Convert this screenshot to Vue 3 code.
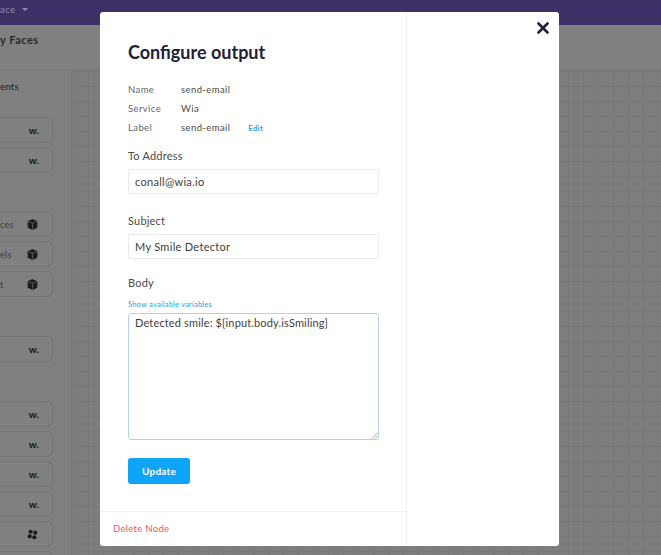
<script setup>
const groups = [
  { top: 25, items: [{ t: '', i: 'w' }, { t: '', i: 'w' }] },
  { top: 38, items: [{ t: 'ces', i: 'box' }, { t: 'els', i: 'box' }, { t: 't', i: 'box' }] },
  { top: 39, items: [{ t: '', i: 'w' }] },
  { top: 39, items: [{ t: '', i: 'w' }, { t: '', i: 'w' }, { t: '', i: 'w' }, { t: '', i: 'w' }, { t: '', i: 'fan' }, { t: '', i: 'none' }] }
]
</script>

<template>
  <div class="page">
    <header class="topbar"><span class="space">ace</span><span class="caret"></span></header>
    <div class="subbar"><span>y Faces</span></div>
    <div class="main">
      <aside class="side">
        <div class="side-title">ents</div>
        <div v-for="(g, gi) in groups" :key="gi" class="group" :style="{ marginTop: g.top + 'px' }">
          <div v-for="(it, ii) in g.items" :key="ii" class="item">
            <span class="item-text">{{ it.t }}</span>
            <span v-if="it.i === 'w'" class="w">w.</span>
            <svg v-else-if="it.i === 'box'" class="ico" viewBox="0 0 12 12"><path d="M6 .6 10.800 2.700V9.300L6 11.400 1.200 9.300V2.700z" fill="#1c1c1c" stroke="#1c1c1c" stroke-linejoin="round"/><path d="M6 4.600v6.400M1.800 3 6 4.600 10.200 3" stroke="#6a6a6a" stroke-width=".8" fill="none"/></svg>
            <svg v-else-if="it.i === 'fan'" class="ico" viewBox="0 0 12 12"><g fill="#1c1c1c"><circle cx="4" cy="3" r="2.300"/><circle cx="9" cy="4" r="2.300"/><circle cx="8" cy="9" r="2.300"/><circle cx="3" cy="8" r="2.300"/></g><circle cx="6" cy="6" r=".8" fill="#808080"/></svg>
          </div>
        </div>
      </aside>
      <div class="canvas"></div>
    </div>

    <section class="modal">
      <div class="col">
        <div class="col-body">
          <h1>Configure output</h1>
          <dl class="meta">
            <div><dt>Name</dt><dd>send-email</dd></div>
            <div><dt>Service</dt><dd>Wia</dd></div>
            <div><dt>Label</dt><dd>send-email</dd><a class="edit">Edit</a></div>
          </dl>
          <label class="lbl first">To Address</label>
          <div class="input">conall@wia.io</div>
          <label class="lbl subject">Subject</label>
          <div class="input">My Smile Detector</div>
          <label class="lbl body">Body</label>
          <a class="vars">Show available variables</a>
          <div class="area">Detected smile: ${input.body.isSmiling}
            <svg class="grip" viewBox="0 0 8 8"><path d="M7.500 1 1 7.500M7.500 4.500 4.500 7.500" stroke="#9a9a9a" stroke-width="1"/></svg>
          </div>
          <button class="update">Update</button>
        </div>
        <div class="col-foot">Delete Node</div>
      </div>
      <svg class="close" viewBox="0 0 12 12"><path d="M1.500 1.500l9 9M10.500 1.500l-9 9" stroke="#1d2238" stroke-width="2.600" stroke-linecap="round"/></svg>
    </section>
  </div>
</template>

<style>
html, body { margin: 0; overflow: hidden; }
</style>

<style scoped>
.page {
  position: relative;
  width: 661px;
  height: 555px;
  overflow: hidden;
  background: #808080;
  font-family: Lato, "Liberation Sans", sans-serif;
  color: #1c1c1c;
}
.topbar {
  height: 25px;
  background: #3f2f67;
  display: flex;
  align-items: center;
  gap: 6px;
  color: #938da8;
  font-size: 9.500px;
  padding-bottom: 7px;
  box-sizing: border-box;
  letter-spacing: .5px;
}
.caret {
  width: 0;
  height: 0;
  border: 3px solid transparent;
  border-top: 3px solid #938da8;
  margin-top: 3px;
}
.subbar {
  height: 46px;
  box-sizing: border-box;
  background: #808080;
  border-bottom: 1px solid #767676;
  padding-top: 8px;
  font-size: 11px;
  font-weight: 700;
  color: #2a2a2a;
  letter-spacing: .5px;
}
.main { display: flex; height: 484px; }
.side {
  width: 72px;
  flex: none;
  background: #808080;
  border-right: 1px solid #767676;
  box-sizing: border-box;
  overflow: hidden;
}
.side-title { font-size: 10px; margin-top: 9px; line-height: 12px; color: #262626; }
.group { display: flex; flex-direction: column; gap: 4px; }
.item {
  height: 26px;
  width: 53px;
  box-sizing: border-box;
  border: 1px solid #747474;
  border-left: 0;
  border-radius: 0 6px 6px 0;
  display: flex;
  align-items: center;
  justify-content: space-between;
  padding-right: 13px;
}
.item-text { font-size: 9px; color: #3d3d3d; letter-spacing: .3px; }
.w { font-size: 10px; font-weight: 900; color: #1c1c1c; line-height: 1; }
.ico { width: 11px; height: 11px; margin-right: 1px; }
.canvas {
  flex: 1;
  background-color: #7d7d7d;
  background-image:
    linear-gradient(#787878 1px, transparent 1px),
    linear-gradient(90deg, #787878 1px, transparent 1px);
  background-size: 15px 15px;
  background-position: 1px 0;
}
.modal {
  position: absolute;
  left: 100px;
  top: 12px;
  width: 459px;
  height: 534px;
  background: #fff;
  border-radius: 3px;
  display: flex;
}
.col {
  width: 307px;
  height: 100%;
  box-sizing: border-box;
  border-right: 1px solid #eef0f4;
  display: flex;
  flex-direction: column;
}
.col-body { flex: 1; padding: 0 27px 0 28px; }
h1 {
  margin: 28px 0 0;
  font-size: 18px;
  line-height: 24px;
  font-weight: 700;
  color: #1d2238;
}
.meta { margin: 16px 0 0; font-size: 9.500px; color: #555; letter-spacing: .4px; }
.meta > div { display: flex; align-items: center; height: 19px; }
dt { width: 53px; color: #666; }
dd { margin: 0; color: #4a4a4a; }
.edit { margin-left: 18px; font-size: 7.500px; font-weight: 700; color: #1d9bf0; margin-top: 2px; }
.lbl { display: block; font-size: 11px; line-height: 14px; color: #4a4a4a; letter-spacing: .2px; }
.lbl.first { margin-top: 12px; }
.lbl.subject { margin-top: 20px; }
.lbl.body { margin-top: 17px; }
.input {
  margin-top: 6px;
  height: 25px;
  width: 251px;
  box-sizing: border-box;
  border: 1px solid #e9ebef;
  border-radius: 2px;
  padding: 0 6px;
  display: flex;
  align-items: center;
  font-size: 11px;
  color: #3e3e3e;
  letter-spacing: .3px;
}
.vars { display: block; margin-top: 10px; font-size: 7.500px; line-height: 10px; color: #2c9df0; letter-spacing: .2px; }
.area {
  position: relative;
  margin-top: 3px;
  width: 251px;
  height: 127px;
  box-sizing: border-box;
  border: 1px solid #b7cff0;
  border-radius: 3px;
  padding: 1px 6px;
  font-size: 11px;
  line-height: 15px;
  color: #3e3e3e;
  letter-spacing: .15px;
}
.grip { position: absolute; right: 0; bottom: 0; width: 7px; height: 7px; }
.update {
  display: block;
  margin-top: 18px;
  width: 62px;
  height: 26px;
  border: 0;
  border-radius: 3px;
  background: #0ea5f9;
  color: #fff;
  font: 700 10px Lato, "Liberation Sans", sans-serif;
  letter-spacing: .2px;
  padding: 0;
}
.col-foot {
  height: 35px;
  box-sizing: border-box;
  border-top: 1px solid #eef0f4;
  padding: 11px 0 0 13px;
  font-size: 9.500px;
  line-height: 12px;
  color: #ee5566;
  letter-spacing: .3px;
}
.close { position: absolute; left: 437px; top: 10px; width: 12px; height: 12px; }
</style>
